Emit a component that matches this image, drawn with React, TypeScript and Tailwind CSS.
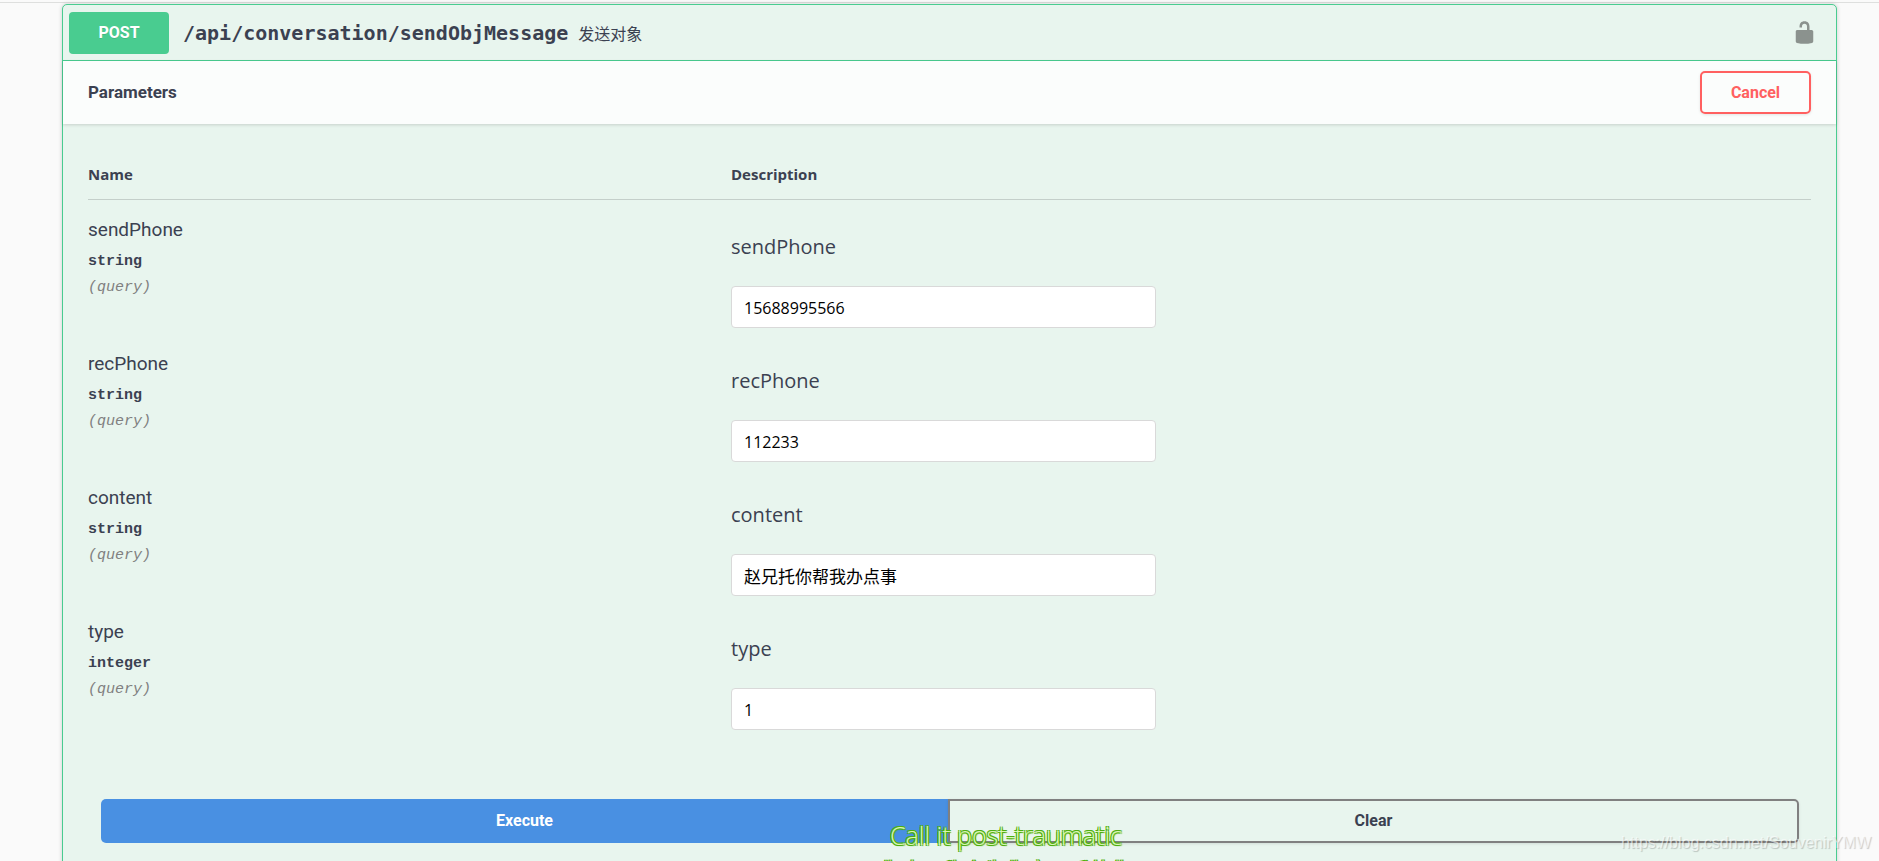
import { useState } from "react";

type Param = {
  name: string;
  type: string;
  value: string;
  lang?: string;
};

const initialParams: Param[] = [
  { name: "sendPhone", type: "string", value: "15688995566" },
  { name: "recPhone", type: "string", value: "112233" },
  { name: "content", type: "string", value: "赵兄托你帮我办点事", lang: "zh" },
  { name: "type", type: "integer", value: "1" },
];

function UnlockIcon() {
  return (
    <svg viewBox="0 0 20 20" className="w-[25px] h-[25px] fill-[#8b928e]">
      <path d="M15.8 8H14V5.6C14 2.703 12.665 1 10 1 7.334 1 6 2.703 6 5.6V6h2v-.801C8 3.754 8.797 3 10 3c1.203 0 2 .754 2 2.199V8H4c-.553 0-1 .646-1 1.199V17c0 .549.428 1.139.951 1.307l1.197.387C5.672 18.861 6.55 19 7.1 19h5.8c.549 0 1.428-.139 1.951-.307l1.196-.387c.524-.167.953-.757.953-1.306V9.199C17 8.646 16.352 8 15.8 8z" />
    </svg>
  );
}

function OperationHeader() {
  return (
    <div className="flex items-center border-b border-[#49cc90] p-[6px] h-14">
      <span className="w-[100px] h-[42px] flex items-center justify-center rounded-[4px] bg-[#49cc90] text-white text-[16px] font-bold font-['Roboto',sans-serif] [text-shadow:0_1px_0_rgba(0,0,0,0.1)]">
        POST
      </span>
      <span className="ml-[14px] text-[20px] font-bold font-['DejaVu_Sans_Mono',monospace]">
        /api/conversation/sendObjMessage
      </span>
      <span lang="zh" className="ml-[10px] text-[16px] font-['Noto_Sans_CJK_SC',sans-serif]">
        发送对象
      </span>
      <button type="button" aria-label="Authorize" className="ml-auto mr-[13px]">
        <UnlockIcon />
      </button>
    </div>
  );
}

function ParamRow({
  param,
  onChange,
}: {
  param: Param;
  onChange: (value: string) => void;
}) {
  return (
    <tr className="align-top">
      <td className="pt-4 font-['Liberation_Mono',monospace] text-[15px]">
        <div className="text-[19px] leading-7 font-['Roboto',sans-serif]">
          {param.name}
        </div>
        <div className="mt-1 leading-7 font-bold">{param.type}</div>
        <div className="leading-6 italic text-[#808080]">(query)</div>
      </td>
      <td className="pt-[33px] pb-[6px]">
        <label
          htmlFor={param.name}
          className="block text-[20px] leading-7 mb-[25px]"
        >
          {param.name}
        </label>
        <input
          id={param.name}
          type="text"
          value={param.value}
          lang={param.lang}
          onChange={(e) => onChange(e.target.value)}
          className="block w-[425px] h-[42px] px-3 pt-[2px] rounded-[4px] border border-[#d9d9d9] bg-white text-black text-[16px] [&:lang(zh)]:text-[17px] [&:lang(zh)]:pt-0 font-['Open_Sans','Noto_Sans_CJK_SC',sans-serif]"
        />
      </td>
    </tr>
  );
}

function App() {
  const [params, setParams] = useState(initialParams);

  const updateParam = (name: string, value: string) => {
    setParams(params.map((p) => (p.name === name ? { ...p, value } : p)));
  };

  return (
    <main className="relative h-screen overflow-hidden bg-[#fafafa] text-[#3b4151] font-['Open_Sans',sans-serif]">
      <div className="h-[3px] border-b border-[#dedfde]" />
      <section className="ml-[62px] mr-[42px] mt-px pb-10 rounded-[5px] border border-[#49cc90] bg-[#e8f5ee] shadow-[0_0_4px_rgba(0,0,0,0.19)]">
        <OperationHeader />
        <div className="relative flex items-center justify-between h-[63px] px-[25px] bg-[#fbfdfc] shadow-[0_1px_3px_rgba(0,0,0,0.15)] font-['Roboto',sans-serif] font-bold">
          <h4 className="text-[17px]">Parameters</h4>
          <button
            type="button"
            className="w-[111px] h-[43px] rounded-[5px] border-2 border-[#ff6060] text-[#ff6060] text-[16px] shadow-[0_1px_3px_rgba(0,0,0,0.1)]"
          >
            Cancel
          </button>
        </div>
        <div className="p-[25px]">
          <table className="w-full table-fixed">
            <thead>
              <tr className="border-b border-[#c4cfca] text-left text-[15px] leading-[20px]">
                <th className="w-[643px] py-[15px] font-bold">Name</th>
                <th className="py-[15px] font-bold">Description</th>
              </tr>
            </thead>
            <tbody>
              {params.map((param) => (
                <ParamRow
                  key={param.name}
                  param={param}
                  onChange={(value) => updateParam(param.name, value)}
                />
              ))}
            </tbody>
          </table>
        </div>
        <div className="flex mt-[38px] pl-[38px] pr-[37px] font-['Roboto',sans-serif] font-bold text-[16px]">
          <button
            type="button"
            className="flex-1 h-11 rounded-l-[5px] bg-[#4990e2] text-white"
          >
            Execute
          </button>
          <button
            type="button"
            className="flex-1 h-11 rounded-r-[5px] border-2 border-[#808080] shadow-[0_1px_3px_rgba(0,0,0,0.1)]"
          >
            Clear
          </button>
        </div>
      </section>

      {/* Floating lyrics that sit over the page */}
      <div className="absolute left-[880px] top-[817px] whitespace-nowrap text-center text-[#d9f5b5] [text-shadow:1px_1px_1px_#4fae10,-1px_-1px_0_#4fae10,1px_-1px_0_#4fae10,-1px_1px_0_#4fae10]">
        <p className="text-[25px] leading-9 font-light">Call it post-traumatic</p>
        <p lang="zh" className="text-[21px] leading-8 font-['Noto_Sans_CJK_SC',sans-serif]">
          你也可称之为你应用后的伤
        </p>
      </div>
      <p className="absolute right-2 bottom-[6px] text-[16px] leading-6 text-white/60 font-['Liberation_Sans',sans-serif] [text-shadow:1px_1px_1px_rgba(0,0,0,0.2)]">
        https://blog.csdn.net/SouvenirYMW
      </p>
    </main>
  );
}

export default App;
